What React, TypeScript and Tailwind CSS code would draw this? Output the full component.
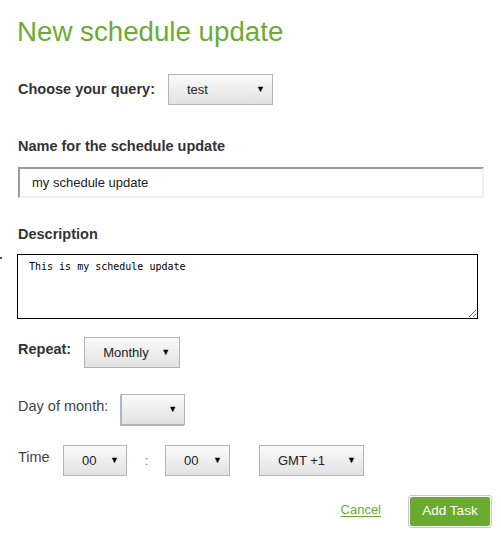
import React from "react";

function Select({ value, w, extra = "" }: { value: string; w: string; extra?: string }) {
  return (
    <div
      className={`flex h-[31px] items-center border border-[#b4b4b4] bg-linear-to-b from-[#fafafa] to-[#e2e2e2] pl-[18px] pr-[7px] text-[13px] text-[#222] ${w} ${extra}`}
    >
      <span>{value}</span>
      <span className="ml-auto text-[9px] leading-none text-black">▼</span>
    </div>
  );
}

export default function App() {
  return (
    <div
      className="relative min-h-[557px] bg-white px-[18px] pt-[16px] text-[#333]"
      style={{ fontFamily: '"Liberation Sans", Arial, sans-serif' }}
    >
      <div className="absolute left-0 top-[257px] h-[2px] w-[2px] bg-[#555]" />
      <h1 className="-ml-px text-[27.7px] leading-[32px] text-[#6cab36]">New schedule update</h1>

      <div className="mt-[26px] flex items-center">
        <span className="text-[14.5px] font-bold">Choose your query:</span>
        <Select value="test" w="ml-[13px] w-[105px]" />
      </div>

      <div className="mt-[31px] text-[14.5px] font-bold leading-[20px]">Name for the schedule update</div>
      <div className="mt-[11px] flex h-[31px] w-[466px] items-center border-2 border-b-[#eeeeee] border-l-[#9a9a9a] border-r-[#eeeeee] border-t-[#9a9a9a] pl-[12px] text-[13px] text-[#222]">
        my schedule update
      </div>

      <div className="mt-[26px] text-[14.5px] font-bold leading-[20px]">Description</div>
      <textarea
        readOnly
        defaultValue="This is my schedule update"
        className="mt-[10px] -ml-px block h-[65px] w-[461px] border border-black pl-[11px] pr-[10px] pt-[5px] text-[10px] leading-[13px] text-black outline-none"
        style={{ fontFamily: '"DejaVu Sans Mono", monospace' }}
      />

      <div className="mt-[18px] flex items-center">
        <span className="mb-[5px] text-[14.5px] font-bold">Repeat:</span>
        <Select value="Monthly" w="ml-[13px] w-[96px]" extra="pr-[9px]" />
      </div>

      <div className="mt-[26px] flex items-center">
        <span className="mb-[5px] text-[14.5px] text-[#444]">Day of month:</span>
        <Select value="" w="ml-[13px] w-[64px]" extra="shadow-[-1px_1px_0_#a7b6cb]" />
      </div>

      <div className="mt-[20px] flex items-center">
        <span className="mb-[6px] w-[45px] text-[14.5px] text-[#444]">Time</span>
        <Select value="00" w="w-[64px]" />
        <span className="mx-[18px] w-[2px] text-[12px] text-[#666]">:</span>
        <Select value="00" w="w-[65px]" />
        <Select value="GMT +1" w="ml-[29px] w-[105px]" />
      </div>

      <div className="-mr-[9px] mt-[19px] flex items-center justify-end">
        <a className="mb-[3px] text-[13px] text-[#6cab36] underline underline-offset-2">Cancel</a>
        <div className="ml-[27px] rounded-[3px] border border-[#c9c9c9] p-[1px]">
          <button className="h-[29px] w-[80px] rounded-[2px] bg-[#6aab2f] text-[13.5px] text-white">Add Task</button>
        </div>
      </div>
    </div>
  );
}
